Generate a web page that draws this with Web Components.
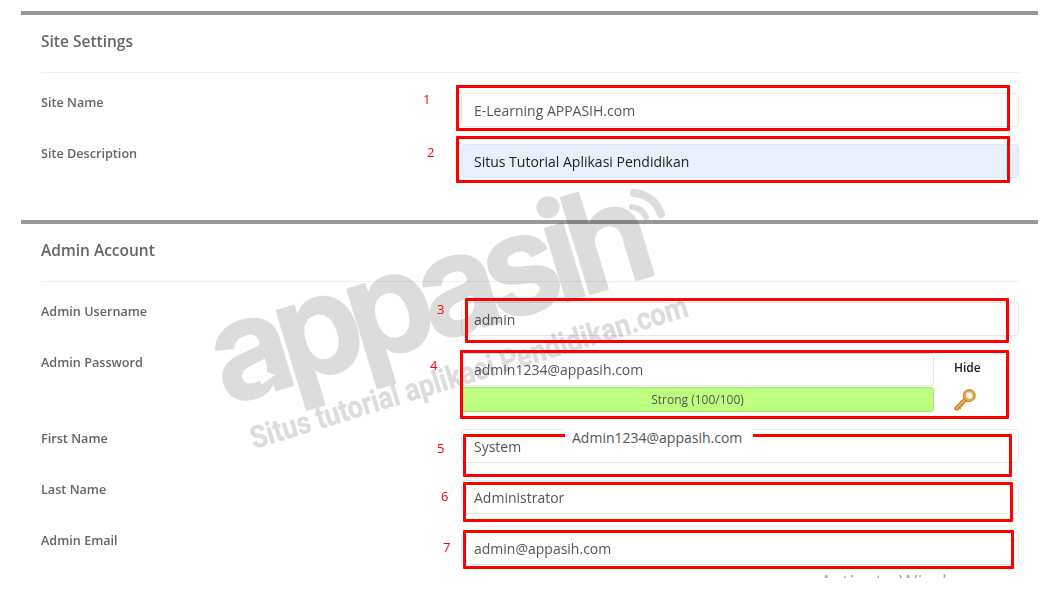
<!DOCTYPE html>
<html><head><meta charset="utf-8">
<style>
html,body{margin:0;padding:0;background:#fff;overflow:hidden;font-family:"Open Sans","Liberation Sans",sans-serif}
body{width:1061px;height:603px}
</style></head>
<body>
<install-page>
  <site-section heading="Site Settings">
    <form-row label="Site Name"><text-field>E-Learning APPASIH.com</text-field></form-row>
    <form-row label="Site Description"><text-field autofill>Situs Tutorial Aplikasi Pendidikan</text-field></form-row>
  </site-section>
  <site-section heading="Admin Account">
    <form-row label="Admin Username"><text-field>admin</text-field></form-row>
    <form-row label="Admin Password"><password-field value="admin1234@appasih.com" strength="Strong (100/100)"></password-field></form-row>
    <form-row label="First Name"><text-field>System</text-field></form-row>
    <form-row label="Last Name"><text-field>Administrator</text-field></form-row>
    <form-row label="Admin Email"><text-field>admin@appasih.com</text-field></form-row>
  </site-section>
  <wm-stamp slot="over"></wm-stamp>
  <mark-box slot="over" n="1" box="456,85,554,46" num="423,92"></mark-box>
  <mark-box slot="over" n="2" box="456,136,554,47" num="427,145"></mark-box>
  <mark-box slot="over" n="3" box="465,298,544,45" num="437,302"></mark-box>
  <mark-box slot="over" n="4" box="460,350,549,69" num="430,358"></mark-box>
  <mark-box slot="over" n="5" box="463,434,549,43" num="437,441"></mark-box>
  <mark-box slot="over" n="6" box="463,482,550,40" num="441,489"></mark-box>
  <mark-box slot="over" n="7" box="463,530,551,39" num="443,540"></mark-box>
  <note-label slot="over">Admin1234@appasih.com</note-label>
  <clip-note slot="over">Activate Windows</clip-note>
</install-page>
<script>
function el(name, css, html){
  customElements.define(name, class extends HTMLElement{
    connectedCallback(){
      if(this.shadowRoot) return;
      const r=this.attachShadow({mode:'open'});
      r.innerHTML='<style>'+css+'</style>'+(typeof html==='function'?html(this):html);
    }
  });
}
el('install-page',
 `:host{display:block;position:relative;width:1061px;height:603px;padding:11px 0 0 21px;box-sizing:border-box;overflow:hidden;color:#555;font:14px "Open Sans","Liberation Sans",sans-serif}
  .main{width:1017px;display:flex;flex-direction:column}`,
 `<div class="main"><slot></slot></div><slot name="over"></slot>`);
el('site-section',
 `:host{display:block;border-top:4px solid #999;padding:0 19px 42px 20px;box-sizing:border-box}
  h2{margin:0 0 20px;height:58px;box-sizing:border-box;border-bottom:1px solid #eee;padding-top:16px;font:600 15.5px/21px "Open Sans","Liberation Sans",sans-serif;color:#666}
  .rows{display:flex;flex-direction:column;gap:17px}`,
 h=>`<h2>${h.getAttribute('heading')}</h2><div class="rows"><slot></slot></div>`);
el('form-row',
 `:host{display:grid;grid-template-columns:420px 1fr}
  label{font:600 12.65px/18px "Open Sans","Liberation Sans",sans-serif;color:#666}`,
 h=>`<label>${h.getAttribute('label')}</label><div><slot></slot></div>`);
el('text-field',
 `:host{display:flex;align-items:center;height:34px;box-sizing:border-box;border:1px solid #e6e6e6;border-radius:4px;padding:1px 12px 0;background:transparent;font:14px/20px "Open Sans","Liberation Sans",sans-serif;color:#555}
  :host([autofill]){background:#e8f0fe;color:#222;border-color:#e2e6ee}`,
 `<slot></slot>`);
el('password-field',
 `:host{display:grid;grid-template-columns:473px 1fr;height:59px}
  .l{display:flex;flex-direction:column;gap:1px}
  .v{height:33px;box-sizing:border-box;border:1px solid #e6e6e6;border-radius:4px;padding:1px 12px 0;display:flex;align-items:center;font:14px/20px "Open Sans","Liberation Sans",sans-serif;color:#555}
  .s{height:25px;box-sizing:border-box;background:#bfff80;border:1px solid #a0e860;border-radius:3px;display:flex;align-items:center;justify-content:center;font:12px/16px "Open Sans","Liberation Sans",sans-serif;color:#555}
  .r{display:flex;flex-direction:column;align-items:flex-start;padding-left:20px}
  b{font:600 12px/16px "Open Sans","Liberation Sans",sans-serif;color:#222;margin-top:7px}
  svg{margin-top:12px;display:block}`,
 h=>`<div class="l"><div class="v">${h.getAttribute('value')}</div><div class="s">${h.getAttribute('strength')}</div></div>
 <div class="r"><b>Hide</b><svg width="23" height="23" viewBox="0 0 23 23">
  <path d="M2.6 20.4 L12.5 10.5" stroke="#b8761c" stroke-width="4.4" stroke-linecap="round"/>
  <path d="M2.6 20.4 L12.5 10.5" stroke="#f2b04a" stroke-width="2.4" stroke-linecap="round"/>
  <path d="M4.5 18.5l2.2 2.2M6.8 16.4l1.8 1.8" stroke="#c4812a" stroke-width="1.4"/>
  <circle cx="15.2" cy="7.6" r="6" fill="#f0a63a" stroke="#c4812a" stroke-width="1"/>
  <circle cx="15.3" cy="7.5" r="3.7" fill="#f6f2e6" stroke="#d99a3e" stroke-width=".6"/>
  <path d="M12.6 5.2l5 4.6" stroke="#fff" stroke-width="1.6"/>
 </svg></div>`);
el('mark-box',
 `:host{display:contents}
  .b{position:absolute;box-sizing:border-box;border:3px solid #f00;border-radius:1px;pointer-events:none;z-index:3}
  .n{position:absolute;font:13px/15px "Open Sans","Liberation Sans",sans-serif;color:#f00;z-index:3}`,
 h=>{const [x,y,w,ht]=h.getAttribute('box').split(',');const [a,b]=h.getAttribute('num').split(',');
  return `<div class="b" style="left:${x}px;top:${y}px;width:${w}px;height:${ht}px"></div><div class="n" style="left:${a}px;top:${b}px">${h.getAttribute('n')}</div>`});
el('note-label',
 `:host{position:absolute;left:565px;top:428px;width:188px;height:20px;box-sizing:border-box;padding-left:7px;background:#fff;z-index:4;font:14px/20px "Open Sans","Liberation Sans",sans-serif;color:#555;white-space:nowrap}`,
 `<slot></slot>`);
el('clip-note',
 `:host{position:absolute;left:820px;top:572px;width:130px;height:6px;overflow:hidden;font:20px/20px "Open Sans","Liberation Sans",sans-serif;color:#aaa;white-space:nowrap;z-index:1}`,
 `<slot></slot>`);
el('wm-stamp',
 `:host{position:absolute;left:0;top:0;width:1061px;height:603px;pointer-events:none;mix-blend-mode:multiply;z-index:2}
  svg{display:block}
  text{fill:#dcdcdc;stroke:#dcdcdc;stroke-linejoin:round}
  .big{font:600 137px Inter,"Open Sans",sans-serif;stroke-width:3px}
  .sub{font:700 31px Roboto,"Open Sans",sans-serif;stroke-width:.4px}`,
 `<svg width="1061" height="603" viewBox="0 0 1061 603">
   <g transform="translate(226,405) rotate(-17)">
     <text class="big" x="0" y="0" textLength="456" lengthAdjust="spacing">appasih</text>
   </g>
   <g transform="translate(254,449) rotate(-17)">
     <text class="sub" x="0" y="0" textLength="456" lengthAdjust="spacingAndGlyphs">Situs tutorial aplikasi Pendidikan.com</text>
   </g>
   <path d="M634 193 q20 2 27 21" fill="none" stroke="#dcdcdc" stroke-width="8" stroke-linecap="round"/>
   <path d="M632 207 q10 1 14 10" fill="none" stroke="#dcdcdc" stroke-width="6" stroke-linecap="round"/>
   <path d="M258 368 l3 17 l14 -10 z" fill="#fff"/>
 </svg>`);
</script>
</body></html>
